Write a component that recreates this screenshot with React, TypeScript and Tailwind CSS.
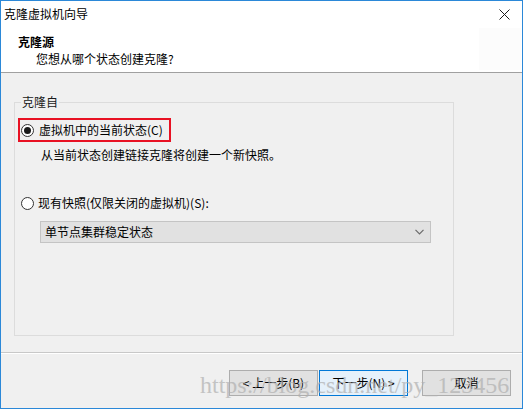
import React from "react";

const font = { fontFamily: '"Noto Sans CJK SC", "Noto Sans", sans-serif' };

function Radio({ checked }: { checked?: boolean }) {
  return (
    <div className="w-[13px] h-[13px] rounded-full border border-[#333333] bg-white flex items-center justify-center shrink-0">
      {checked && <div className="w-[7px] h-[7px] rounded-full bg-[#1a1a1a]" />}
    </div>
  );
}

export default function App() {
  return (
    <div className="w-[524px] h-[410px] bg-white text-[12px] leading-[16px] text-black" style={font}>
      <div className="relative w-[523px] h-[409px] border border-[#2b88d8] flex flex-col bg-[#f0f0f0]">
        {/* title bar */}
        <div className="h-[26px] bg-white flex items-center justify-between pl-[3px] pr-[12px] shrink-0">
          <span>克隆虚拟机向导</span>
          <svg width="11" height="11" viewBox="0 0 11 11">
            <path d="M0.5 0.5 L10.5 10.5 M10.5 0.5 L0.5 10.5" stroke="#1a1a1a" strokeWidth="1" />
          </svg>
        </div>
        {/* header */}
        <div className="h-[45px] bg-white flex shrink-0">
          <div className="flex-1 pl-[17px] pt-[7px]">
            <div className="font-bold">克隆源</div>
            <div className="pl-[18px] mt-[1px]">您想从哪个状态创建克隆?</div>
          </div>
          <div className="w-[42px] h-[42px] mt-[1px] mr-[1px] bg-[#fcfcfc]" />
        </div>
        <div className="h-[1px] bg-[#a0a0a0] shrink-0" />
        {/* content */}
        <div className="flex-1 pl-[13px] pt-[29px]">
          <div className="relative w-[440px] h-[234px] border border-[#dcdcdc]">
            <span className="absolute left-[6px] -top-[9px] px-[1px] bg-[#f0f0f0] text-[#1a1a1a]">克隆自</span>
            <div className="pl-[3px] pt-[15px]">
              <div className="w-[153px] h-[24px] border-2 border-[#e81123] flex items-center pl-[1px]">
                <Radio checked />
                <span className="ml-[5px]">虚拟机中的当前状态(C)</span>
              </div>
            </div>
            <div className="pl-[26px] mt-[5px]">从当前状态创建链接克隆将创建一个新快照。</div>
            <div className="flex items-center pl-[6px] mt-[32px]">
              <Radio />
              <span className="ml-[4px]">现有快照(仅限关闭的虚拟机)(S):</span>
            </div>
            <div className="ml-[25px] mt-[10px] w-[391px] h-[22px] border border-[#c4c4c4] bg-[#e1e1e1] flex items-center justify-between pl-[4px] pr-[6px]">
              <span>单节点集群稳定状态</span>
              <svg width="9" height="6" viewBox="0 0 9 6">
                <path d="M0.5 0.8 L4.5 4.8 L8.5 0.8" stroke="#6b6b6b" strokeWidth="1.2" fill="none" />
              </svg>
            </div>
          </div>
        </div>
        <div className="h-[1px] bg-[#c8c8c8] shrink-0" />
        <div className="h-[1px] bg-white shrink-0" />
        {/* footer */}
        <div className="h-[54px] shrink-0 flex justify-end items-start pt-[16px] pr-[11px]">
          <div className="w-[89px] h-[26px] border border-[#adadad] bg-[#e1e1e1] flex items-center justify-center">&lt; 上一步(B)</div>
          <div className="ml-[1px] w-[89px] h-[26px] border border-[#0078d7] bg-[#e5f1fb] flex items-center justify-center">下一步(N) &gt;</div>
          <div className="ml-[14px] w-[89px] h-[26px] border border-[#adadad] bg-[#e1e1e1] flex items-center justify-center">取消</div>
        </div>
        {/* watermark */}
        <div
          className="absolute left-[199px] top-[370px] text-[24px] leading-[28px] text-[#b0b0b0] opacity-70 pointer-events-none whitespace-nowrap"
          style={{ fontFamily: '"Liberation Serif", serif' }}
        >
          https://blog.csdn.net/py_123456
        </div>
      </div>
    </div>
  );
}
